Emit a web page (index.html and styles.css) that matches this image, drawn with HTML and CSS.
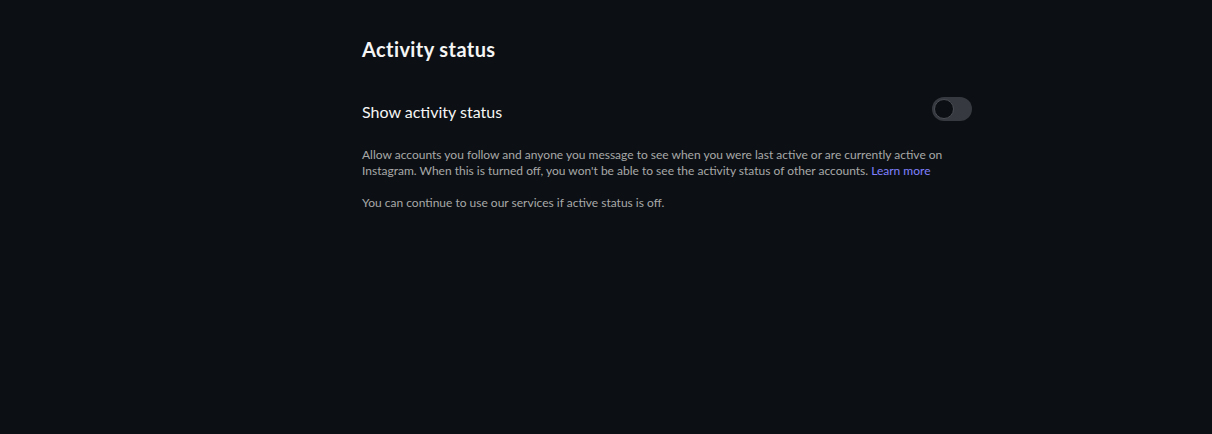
FILE: index.html
```html
<!DOCTYPE html>
<html lang="en">
<head>
<meta charset="utf-8">
<title>Activity status</title>
<link rel="stylesheet" href="styles.css">
</head>
<body>
<main class="page">
  <section class="panel">
    <h1 class="title">Activity status</h1>
    <div class="row">
      <span class="row-label">Show activity status</span>
      <span class="toggle" role="switch" aria-checked="false"><span class="knob"></span></span>
    </div>
    <p class="desc">Allow accounts you follow and anyone you message to see when you were last active or are currently active on Instagram. When this is turned off, you won't be able to see the activity status of other accounts. <a class="link" href="#">Learn more</a></p>
    <p class="desc note">You can continue to use our services if active status is off.</p>
  </section>
</main>
</body>
</html>
```
FILE: styles.css
```css
html, body {
  margin: 0;
  padding: 0;
  background: #0c1014;
  height: 100%;
}
body {
  font-family: Lato, "Open Sans", "Liberation Sans", sans-serif;
  color: #f5f5f5;
}
.page {
  display: flex;
  padding-left: 362px;
  padding-top: 35px;
}
.panel {
  width: 610px;
  display: flex;
  flex-direction: column;
}
.title {
  margin: 0;
  font-size: 20px;
  line-height: 28px;
  font-weight: 700;
  letter-spacing: 0.4px;
  color: #f5f5f5;
}
.row {
  margin-top: 34px;
  display: flex;
  align-items: flex-start;
  justify-content: space-between;
  height: 24px;
}
.row-label {
  font-size: 16px;
  line-height: 20px;
  padding-top: 5px;
}
.toggle {
  width: 40px;
  height: 24px;
  border-radius: 12px;
  background: #363a40;
  display: flex;
  align-items: center;
  padding: 2px;
  box-sizing: border-box;
}
.knob {
  width: 20px;
  height: 20px;
  border-radius: 50%;
  background: #0c1014;
  box-sizing: border-box;
  border: 1px solid #4a4e54;
}
.desc {
  margin: 0;
  margin-top: 26px;
  font-size: 12px;
  line-height: 16px;
  color: #a8a8a8;
}
.note {
  margin-top: 16px;
}
.link {
  color: #8080ff;
  text-decoration: none;
}
```
